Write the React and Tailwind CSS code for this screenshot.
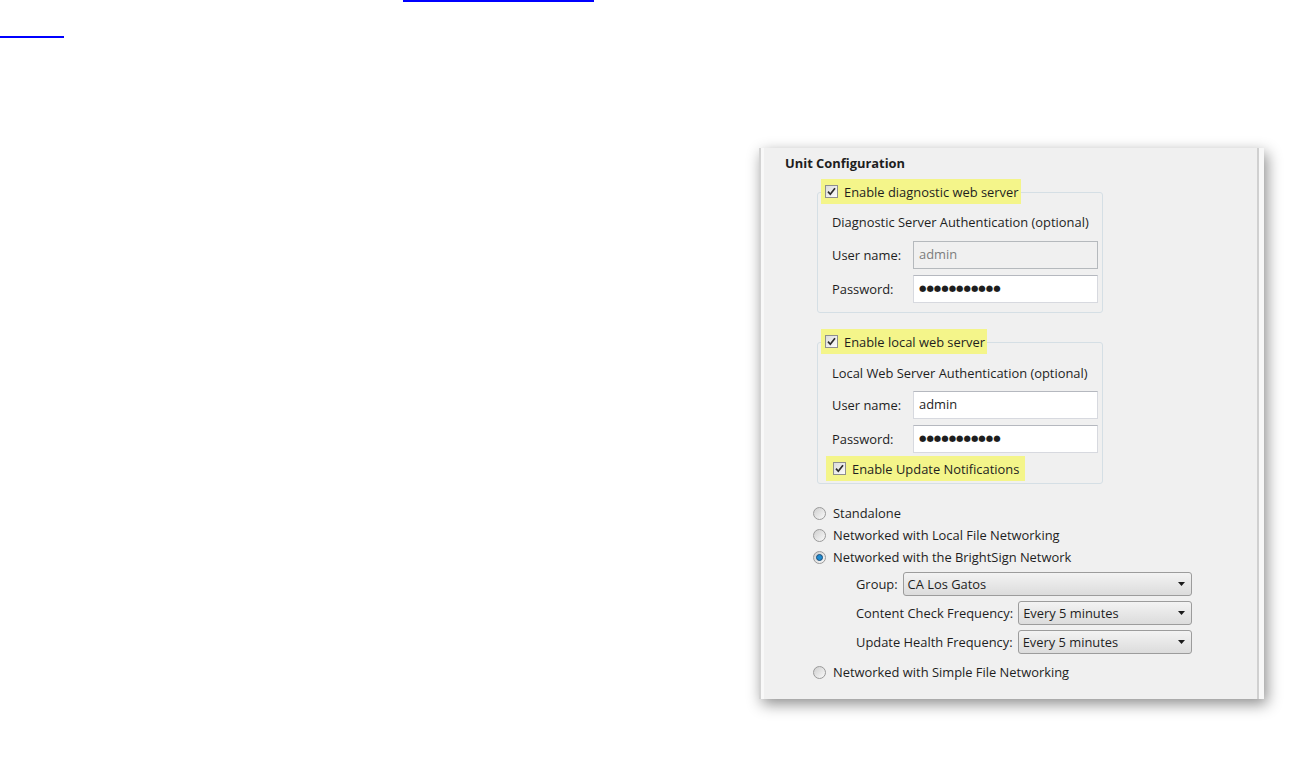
import React from 'react';

const font = { fontFamily: '"Open Sans", "Noto Sans", sans-serif' };

const CheckBox = () => (
    <span className="w-[13px] h-[13px] shrink-0 border border-[#8e8f8f] bg-gradient-to-br from-[#dcdcdc] to-[#fbfbfb] flex items-center justify-center">
        <svg width="9" height="9" viewBox="0 0 9 9">
            <path d="M1 4.6 L3.3 7.2 L8 1.2" fill="none" stroke="#2b2b2b" strokeWidth="1.7" />
        </svg>
    </span>
);

const Legend = ({ children }) => (
    <div className="absolute -top-[14px] left-[3px] h-[25px] pl-[4px] pr-[2px] bg-[#f4f58a] flex items-center gap-[6px]">
        <CheckBox />
        <span>{children}</span>
    </div>
);

const Field = ({ label, value, disabled, password }) => (
    <div className="flex items-center">
        <span className="w-[81px] shrink-0">{label}</span>
        <div
            className={
                disabled
                    ? 'w-[185px] h-[28px] border border-[#b5b9bd] bg-[#f0f0f0] text-[#7c7c7c] flex items-center pl-[5px] pb-[2px]'
                    : 'w-[185px] h-[28px] border border-[#d7d9df] border-t-[#b5b8bf] bg-white text-[#1e1e1e] flex items-center pl-[5px] pb-[2px]'
            }
        >
            {password ? (
                <span className="text-[8.5px] tracking-[0px]" style={{ fontFamily: '"DejaVu Sans", sans-serif' }}>●●●●●●●●●●●</span>
            ) : (
                value
            )}
        </div>
    </div>
);

const Radio = ({ checked, children }) => (
    <div className="h-[22px] flex items-center gap-[7px]">
        <span className="w-[13px] h-[13px] rounded-full border border-[#9a9a9a] bg-gradient-to-br from-[#cfcfcf] to-[#fafafa] flex items-center justify-center">
            {checked && <span className="w-[7px] h-[7px] rounded-full bg-[#1f8bd0] border border-[#1c4e78]" />}
        </span>
        <span>{children}</span>
    </div>
);

const Select = ({ label, value }) => (
    <div className="flex items-center gap-[5px]">
        <span>{label}</span>
        <div className="flex-1 h-[24px] border border-[#9c9c9c] rounded-[3px] bg-gradient-to-b from-[#f3f3f3] to-[#dcdcdc] flex items-center justify-between pl-[4px] pr-[6px] pb-[1px]">
            <span>{value}</span>
            <svg width="7" height="4" viewBox="0 0 7 4"><path d="M0 0 H7 L3.5 4 Z" fill="#1a1a1a" /></svg>
        </div>
    </div>
);

export default function App() {
    return (
        <div className="w-full h-[768px] bg-white overflow-hidden text-[12.9px] leading-[16px] text-[#1e1e1e]" style={font}>
            {/* link underlines */}
            <div className="pl-[403px]">
                <div className="w-[191px] h-[2px] bg-[#0000ff]" />
            </div>
            <div className="mt-[34px] w-[64px] h-[2px] bg-[#0000ff]" />

            {/* dialog */}
            <div className="ml-[759px] mt-[110px] w-[505px] h-[551px] bg-[#f0f0f0] flex shadow-[3px_5px_14px_rgba(0,0,0,0.45)]">
                <div className="w-[2px] bg-[#d3d3d3]" />
                <div className="w-[3px] bg-[#f8f8f8]" />

                <div className="flex-1 flex flex-col">
                    <div className="mt-[7px] ml-[21px] font-bold">Unit Configuration</div>

                    {/* diagnostic server */}
                    <div className="relative mt-[21px] ml-[53px] w-[286px] h-[121px] border border-[#d5dfe5] rounded-[3px] pt-[21px] pl-[14px]">
                        <Legend>Enable diagnostic web server</Legend>
                        <div>Diagnostic Server Authentication (optional)</div>
                        <div className="mt-[11px] flex flex-col gap-[6px]">
                            <Field label="User name:" value="admin" disabled />
                            <Field label="Password:" password />
                        </div>
                    </div>

                    {/* local server */}
                    <div className="relative mt-[29px] ml-[53px] w-[286px] h-[142px] border border-[#d5dfe5] rounded-[3px] pt-[22px] pl-[14px]">
                        <Legend>Enable local web server</Legend>
                        <div>Local Web Server Authentication (optional)</div>
                        <div className="mt-[10px] flex flex-col gap-[6px]">
                            <Field label="User name:" value="admin" />
                            <Field label="Password:" password />
                        </div>
                        <div className="mt-[3px] -ml-[6px] self-start inline-flex h-[25px] pl-[7px] pr-[6px] bg-[#f4f58a] items-center gap-[6px]">
                            <CheckBox />
                            <span>Enable Update Notifications</span>
                        </div>
                    </div>

                    {/* networking */}
                    <div className="mt-[18px] ml-[49px] flex flex-col">
                        <Radio>Standalone</Radio>
                        <Radio>Networked with Local File Networking</Radio>
                        <Radio checked>Networked with the BrightSign Network</Radio>
                        <div className="mt-[4px] ml-[43px] w-[336px] flex flex-col gap-[5px]">
                            <Select label="Group:" value="CA Los Gatos" />
                            <Select label="Content Check Frequency:" value="Every 5 minutes" />
                            <Select label="Update Health Frequency:" value="Every 5 minutes" />
                        </div>
                        <div className="mt-[7px]">
                            <Radio>Networked with Simple File Networking</Radio>
                        </div>
                    </div>
                </div>

                <div className="w-[2px] bg-[#d0d0d0]" />
                <div className="w-[5px] bg-[#f7f7f7]" />
            </div>
        </div>
    );
}
